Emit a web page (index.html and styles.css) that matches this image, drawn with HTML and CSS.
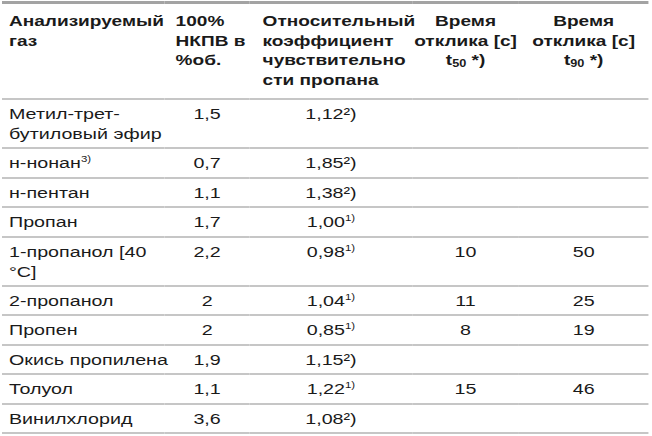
FILE: index.html
```html
<!DOCTYPE html>
<html lang="ru">
<head>
<meta charset="utf-8">
<link rel="stylesheet" href="styles.css">
</head>
<body>
<div class="sheet">
<table class="gas">
  <colgroup>
    <col class="c1"><col class="c2"><col class="c3"><col class="c4"><col class="c5">
  </colgroup>
  <thead>
    <tr>
      <th class="left">Анализируемый<br>газ</th>
      <th class="left p2">100%<br>НКПВ в<br>%об.</th>
      <th class="left p3">Относительный<br>коэффициент<br>чувствительно<br>сти пропана</th>
      <th class="mid">Время<br>отклика [с]<br>t<sub>50</sub> *)</th>
      <th class="mid">Время<br>отклика [с]<br>t<sub>90</sub> *)</th>
    </tr>
  </thead>
  <tbody>
    <tr><td>Метил-трет-<br>бутиловый эфир</td><td class="mid">1,5</td><td class="mid">1,12²)</td><td></td><td></td></tr>
    <tr><td>н-нонан<sup>3)</sup></td><td class="mid">0,7</td><td class="mid">1,85²)</td><td></td><td></td></tr>
    <tr><td>н-пентан</td><td class="mid">1,1</td><td class="mid">1,38²)</td><td></td><td></td></tr>
    <tr><td>Пропан</td><td class="mid">1,7</td><td class="mid">1,00<sup>1)</sup></td><td></td><td></td></tr>
    <tr><td>1-пропанол [40<br>°C]</td><td class="mid">2,2</td><td class="mid">0,98<sup>1)</sup></td><td class="mid">10</td><td class="mid">50</td></tr>
    <tr><td>2-пропанол</td><td class="mid">2</td><td class="mid">1,04<sup>1)</sup></td><td class="mid">11</td><td class="mid">25</td></tr>
    <tr><td>Пропен</td><td class="mid">2</td><td class="mid">0,85<sup>1)</sup></td><td class="mid">8</td><td class="mid">19</td></tr>
    <tr><td>Окись пропилена</td><td class="mid">1,9</td><td class="mid">1,15²)</td><td></td><td></td></tr>
    <tr><td>Толуол</td><td class="mid">1,1</td><td class="mid">1,22<sup>1)</sup></td><td class="mid">15</td><td class="mid">46</td></tr>
    <tr><td>Винилхлорид</td><td class="mid">3,6</td><td class="mid">1,08²)</td><td></td><td></td></tr>
  </tbody>
</table>
</div>
</body>
</html>
```
FILE: styles.css
```css
html, body {
  margin: 0;
  padding: 0;
  background: #ffffff;
}
body {
  padding: 1px 0 0 2px;
  font-family: "Liberation Sans", Arial, sans-serif;
  color: #1a1a1a;
}
.sheet {
  width: 509px;
  transform: scaleX(1.27);
  transform-origin: 0 0;
}
.gas {
  width: 509px;
  border-collapse: collapse;
  table-layout: fixed;
  border-top: 3px solid #a3a3a3;
  font-size: 15.5px;
}
.c1 { width: 128px; }
.c2 { width: 67px; }
.c3 { width: 128px; }
.c4 { width: 84px; }
.c5 { width: 102px; }
.gas th {
  font-weight: bold;
  font-size: 15px;
  line-height: 19.5px;
  padding: 7px 3px 9px 5.5px;
  vertical-align: top;
  white-space: nowrap;
  border-bottom: 2px solid #c6c6c6;
}
.gas th.left { text-align: left; }
.gas th.p2 { padding-left: 8.7px; }
.gas th.p3 { padding-left: 10.2px; }
.gas th.mid { text-align: center; padding-left: 1px; padding-right: 1px; }
.gas td {
  line-height: 20px;
  padding: 4px 3px 3.4px 5.5px;
  vertical-align: top;
  white-space: nowrap;
  border-bottom: 2px solid #c6c6c6;
}
.gas td.mid { text-align: center; padding-left: 3px; }
sub {
  font-size: 10px;
  vertical-align: -2px;
  line-height: 0;
}
sup {
  font-size: 9px;
  vertical-align: 6px;
  line-height: 0;
}
```
